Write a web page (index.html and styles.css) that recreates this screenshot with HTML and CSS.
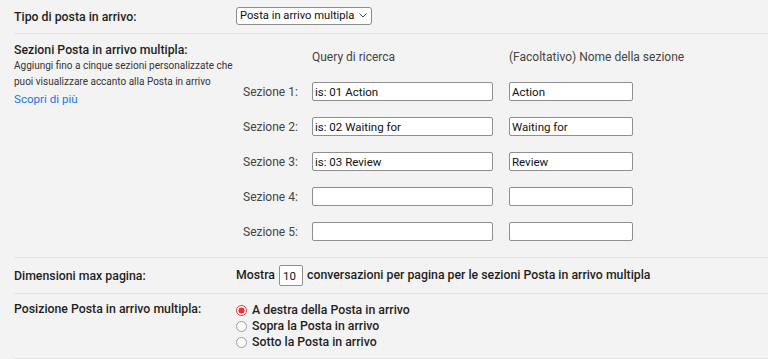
FILE: index.html
```html
<!DOCTYPE html>
<html lang="it">

<head>
  <link rel="stylesheet" href="styles.css">
</head>

<body>
  <div class="settings">

    <div class="row row-type">
      <div class="row-label">Tipo di posta in arrivo:</div>
      <div class="row-value">
        <div class="select">
          <span>Posta in arrivo multipla</span>
          <svg width="8" height="5" viewBox="0 0 8 5"><path d="M0.5 0.5 L4 4 L7.5 0.5" fill="none" stroke="#444" stroke-width="1"/></svg>
        </div>
      </div>
    </div>

    <div class="row row-sections">
      <div class="row-label">
        <div class="title">Sezioni Posta in arrivo multipla:</div>
        <div class="desc">Aggiungi fino a cinque sezioni personalizzate che puoi visualizzare accanto alla Posta in arrivo</div>
        <a class="more" href="#">Scopri di più</a>
      </div>
      <div class="sections">
        <div class="sec-head"></div>
        <div class="sec-head">Query di ricerca</div>
        <div class="sec-head">(Facoltativo) Nome della sezione</div>

        <div class="sec-name">Sezione 1:</div>
        <div><input class="field field-query" type="text" value="is: 01 Action"></div>
        <div><input class="field field-name" type="text" value="Action"></div>

        <div class="sec-name">Sezione 2:</div>
        <div><input class="field field-query" type="text" value="is: 02 Waiting for"></div>
        <div><input class="field field-name" type="text" value="Waiting for"></div>

        <div class="sec-name">Sezione 3:</div>
        <div><input class="field field-query" type="text" value="is: 03 Review"></div>
        <div><input class="field field-name" type="text" value="Review"></div>

        <div class="sec-name">Sezione 4:</div>
        <div><input class="field field-query" type="text" value=""></div>
        <div><input class="field field-name" type="text" value=""></div>

        <div class="sec-name">Sezione 5:</div>
        <div><input class="field field-query" type="text" value=""></div>
        <div><input class="field field-name" type="text" value=""></div>
      </div>
    </div>

    <div class="row row-size">
      <div class="row-label">Dimensioni max pagina:</div>
      <div class="row-value strong">
        Mostra <input class="field field-count" type="text" value="10"> conversazioni per pagina per le sezioni Posta in arrivo multipla
      </div>
    </div>

    <div class="row row-position">
      <div class="row-label">Posizione Posta in arrivo multipla:</div>
      <div class="row-value options">
        <label class="option"><input type="radio" name="pos" checked> A destra della Posta in arrivo</label>
        <label class="option"><input type="radio" name="pos"> Sopra la Posta in arrivo</label>
        <label class="option"><input type="radio" name="pos"> Sotto la Posta in arrivo</label>
      </div>
    </div>

  </div>
</body>

</html>
```

FILE: styles.css
```css
body {
  margin: 0;
  background-color: #f3f3f3;
  font-family: Roboto, "Noto Sans", sans-serif;
  font-size: 12px;
  color: #222;
}

.settings {
  padding-left: 14px;
}

.row {
  display: grid;
  grid-template-columns: 222px 1fr;
  border-bottom: 1px solid #e3e3e3;
}

.row-label {
  font-size: 12.3px;
  font-weight: 500;
  color: #1f1f1f;
}

/* first row: inbox type */
.row-type {
  height: 33px;
  align-items: center;
}

.select {
  display: inline-flex;
  align-items: center;
  gap: 5px;
  height: 16px;
  margin-bottom: 2px;
  padding: 0 4px 0 3px;
  background-color: #fff;
  border: 1px solid #8a8a8a;
  border-radius: 3px;
  font-size: 11.2px;
  color: #111;
}

/* sections block */
.row-sections {
  height: 223px;
}

.row-sections .row-label {
  padding-top: 8px;
}

.title {
  line-height: 16px;
}

.desc {
  width: 222px;
  font-size: 10px;
  font-weight: 400;
  line-height: 16px;
  color: #333;
}

.more {
  display: block;
  margin-top: 0;
  font-size: 11.6px;
  font-weight: 400;
  line-height: 18px;
  color: #1a73e8;
  text-decoration: none;
}

.sections {
  display: grid;
  grid-template-columns: 76px 197px 124px;
  grid-auto-rows: 35px;
  align-items: center;
  padding-top: 5px;
  color: #444;
}

.sec-head {
  white-space: nowrap;
  color: #444;
}

.sec-name {
  padding-left: 7px;
}

.field {
  box-sizing: border-box;
  height: 19px;
  margin: 0;
  padding: 0 2px;
  font-family: inherit;
  font-size: 11.5px;
  color: #111;
  background-color: #fff;
  border: 1px solid #8f8f8f;
  border-radius: 2px;
  outline: none;
}

.field-query {
  width: 181px;
}

.field-name {
  width: 124px;
}

/* page size */
.row-size {
  height: 35px;
  align-items: center;
}

.strong {
  font-size: 12.3px;
  font-weight: 500;
  color: #1f1f1f;
}

.field-count {
  width: 24px;
  height: 21px;
  margin: 0 1px;
  padding: 0 3px;
  font-weight: 400;
  vertical-align: middle;
}

/* position */
.row-position {
  height: 64px;
  align-items: start;
}

.row-position .row-label {
  padding-top: 8px;
}

.options {
  display: flex;
  flex-direction: column;
  padding-top: 8px;
  font-size: 12.3px;
  font-weight: 500;
  color: #1f1f1f;
}

.option {
  display: flex;
  align-items: center;
  gap: 5px;
  height: 16px;
}

.option input {
  appearance: none;
  width: 11px;
  height: 11px;
  margin: 0;
  border: 1px solid #999;
  border-radius: 50%;
  background-color: #fff;
}

.option input:checked {
  border-color: #e8303a;
  background: radial-gradient(circle, #e8303a 0 2.8px, #fff 3.3px);
}
```
